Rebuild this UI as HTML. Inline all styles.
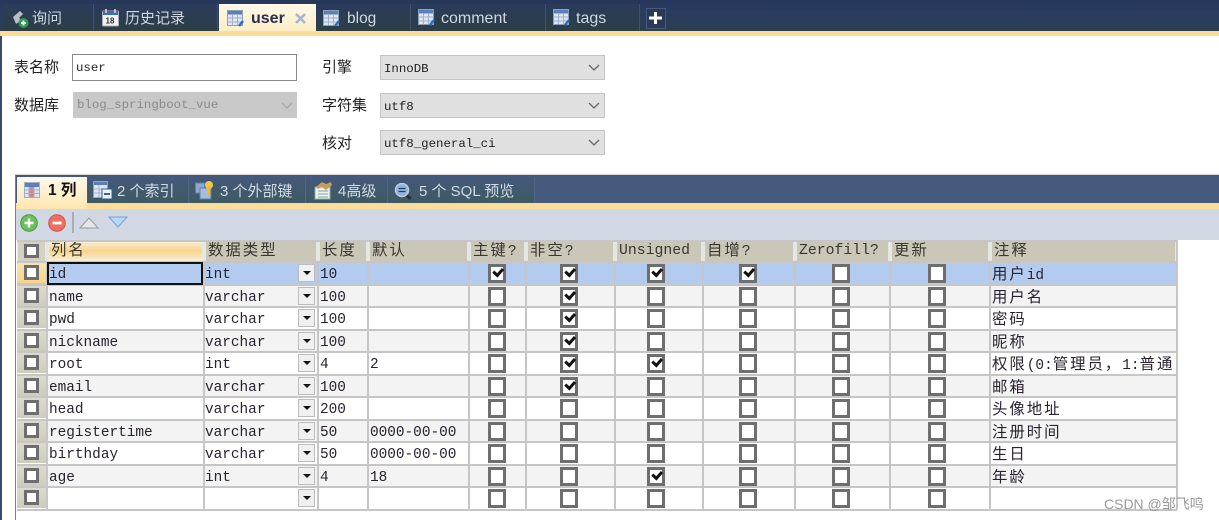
<!DOCTYPE html>
<html><head><meta charset="utf-8">
<style>
html,body{margin:0;padding:0;background:#fff}
#p{position:relative;width:1219px;height:520px;overflow:hidden;background:#fff;font-family:"Liberation Sans","Noto Sans CJK SC",sans-serif;color:#222;filter:blur(.3px)}
#p div,#p svg,#p span{position:absolute}
#p i{font-style:normal;font-size:15.4px;letter-spacing:2px}
.t{white-space:nowrap}
.tab{top:4px;height:27px;background:linear-gradient(#2b3b5c,#2c3f46);border-right:1px solid #3f5168}
.tl{top:8px;font-size:15px;line-height:22px;color:#cfd6de;white-space:nowrap}
.lb{font-size:15px;line-height:20px;color:#222;white-space:nowrap}
.sel{left:380px;width:223px;height:23px;background:#e0e0e0;border:1px solid #c4c4c4;font:12.4px/26px "Liberation Mono",monospace;text-indent:3px;color:#222}
.ar{width:12px;height:7px}
.tab2{top:177px;height:26px;background:linear-gradient(#44597a,#3d5a62);border-right:1px solid #52667f}
.t2l{top:182px;font-size:15px;line-height:20px;color:#d3dae2;white-space:nowrap}
.r{left:17px;width:1160px;height:22.5px;font:14.4px/22.5px "Liberation Mono","Noto Sans CJK SC",monospace;color:#2a2230}
.r.g{background:#f3f3f3}.r.s{background:#b2cbee}
.r span{top:2px;white-space:nowrap}
.a{left:32px}.b{left:188px}.c{left:303px}.d{left:353px}.e{left:975px;width:183px;overflow:hidden;height:21px}
.v{top:0;width:2px;height:248px;background:#c6c6c6}
.h{left:17px;width:1160px;height:2px;background:#c6c6c6}
.rh{left:0;top:1px;width:29px;height:20px;background:linear-gradient(#dcd9ce,#cfccbf)}
.cb{top:2px;width:12px;height:13px;background:#fff;border:3px solid #6e6e6e}
.rh .cb{left:7px;top:2px;width:9px;height:9px}
.cb.k:after{content:"";position:absolute;left:2px;top:1px;width:7px;height:3.5px;border-left:3px solid #111;border-bottom:3px solid #111;transform:rotate(-48deg)}
.k1{left:471px}.k2{left:543px}.k3{left:630px}.k4{left:722px}.k5{left:815px}.k6{left:911px}
.dd{left:281px;top:2px;width:15px;height:16px;background:#f0f0f0;border:1.5px solid #bcbcbc}
.dd:after{content:"";position:absolute;left:3.500px;top:6px;border-left:4px solid transparent;border-right:4px solid transparent;border-top:4px solid #111}
.hd{top:241px;height:20px;background:#cbc7b8;font:14.8px/20px "Liberation Mono","Noto Sans CJK SC",monospace;color:#3a3630;text-indent:2px;white-space:nowrap;overflow:hidden}
</style></head><body>
<div id="p">
<svg width="0" height="0" style="position:absolute"><defs>
<symbol id="tb" viewBox="0 0 18 18"><rect x="0.5" y="0.5" width="15" height="15" fill="#dfe6f0" stroke="#8c9fbd"/><rect x="1" y="1" width="14" height="3.5" fill="#5c7fb8"/><path d="M1 8h14M1 12h14M5.500 4v11M10.500 4v11" stroke="#9db0cc"/><path d="M12 16l4-5" stroke="#2a6fc0" stroke-width="2.500"/></symbol>
</defs></svg>

<!-- top tabs -->
<div style="left:0;top:0;width:1219px;height:31px;background:linear-gradient(#26375a 0,#2a3c60 40%,#2c3f4c 100%)"></div>
<div style="left:0;top:31px;width:1219px;height:5px;background:#fbdc98"></div>
<div style="left:0;top:36px;width:1.5px;height:484px;background:#3a4a68"></div>
<div class="tab" style="left:3px;width:90px"></div>
<div class="tab" style="left:95px;width:122px"></div>
<div style="left:219px;top:4px;width:97px;height:27px;background:linear-gradient(#fff8e8,#fdeec6)"></div>
<div class="tab" style="left:317px;width:93px"></div>
<div class="tab" style="left:411px;width:134px"></div>
<div class="tab" style="left:546px;width:93px"></div>

<svg style="left:11px;top:9px" width="18" height="20" viewBox="0 0 18 20"><path d="M2 8l7-6 3 3-4 4 3 2-6 4z" fill="#b9bec6"/><circle cx="12.500" cy="14" r="5" fill="#2f9a4f"/><path d="M10 14h5M12.500 11.500v5" stroke="#fff" stroke-width="1.800"/></svg>
<div class="tl" style="left:32px">询问</div>
<svg style="left:102px;top:9px" width="17" height="18" viewBox="0 0 17 18"><rect x="0.500" y="2" width="16" height="15" rx="1" fill="#f2f2ee" stroke="#aab"/><rect x="1" y="2" width="15" height="4" fill="#3e6fb0"/><path d="M4 0v4M13 0v4" stroke="#ddd" stroke-width="1.500"/><text x="3.500" y="14.500" font-size="8" font-weight="bold" font-family="Liberation Sans" fill="#333">18</text></svg>
<div class="tl" style="left:125px">历史记录</div>
<svg style="left:227px;top:10px" width="18" height="18"><use href="#tb"/></svg>
<div class="tl" style="left:251px;font-weight:bold;color:#26304a;font-size:16px">user</div>
<svg style="left:295px;top:13px" width="11" height="11" viewBox="0 0 11 11"><path d="M1 1l9 9M10 1l-9 9" stroke="#9fb4d6" stroke-width="2.500"/></svg>
<svg style="left:323px;top:10px" width="18" height="18"><use href="#tb"/></svg>
<div class="tl" style="left:347px;font-size:15.5px">blog</div>
<svg style="left:418px;top:9px" width="18" height="18"><use href="#tb"/></svg>
<div class="tl" style="left:441px;font-size:16px">comment</div>
<svg style="left:553px;top:9px" width="18" height="18"><use href="#tb"/></svg>
<div class="tl" style="left:576px;font-size:16px">tags</div>
<div style="left:646px;top:8px;width:18px;height:19px;border:1px solid #46587a;background:#283a58"></div>
<svg style="left:648px;top:11px" width="15" height="14" viewBox="0 0 15 14"><path d="M7.500 1v12M1 7h13" stroke="#fff" stroke-width="3"/></svg>

<!-- form -->
<div class="lb" style="left:14px;top:58px">表名称</div>
<div style="left:72px;top:54px;width:223px;height:25px;border:1.500px solid #8a8a8a;background:#fff;font:12.4px/27px 'Liberation Mono',monospace;text-indent:3px">user</div>
<div class="lb" style="left:14px;top:96px">数据库</div>
<div style="left:73px;top:92px;width:224px;height:26px;background:#c8c8c8;font:12.4px/27px 'Liberation Mono',monospace;text-indent:4px;color:#8a8a8a">blog_springboot_vue</div>
<svg class="ar" style="left:281px;top:102px" viewBox="0 0 12 7"><path d="M1 1l5 5 5-5" fill="none" stroke="#a8a8a8" stroke-width="1.300"/></svg>
<div class="lb" style="left:322px;top:58px">引擎</div>
<div class="lb" style="left:322px;top:96px">字符集</div>
<div class="lb" style="left:322px;top:134px">核对</div>
<div class="sel" style="top:55px">InnoDB</div>
<div class="sel" style="top:93px">utf8</div>
<div class="sel" style="top:130px">utf8_general_ci</div>
<svg class="ar" style="left:588px;top:64px" viewBox="0 0 12 7"><path d="M1 1l5 5 5-5" fill="none" stroke="#666" stroke-width="1.300"/></svg>
<svg class="ar" style="left:588px;top:102px" viewBox="0 0 12 7"><path d="M1 1l5 5 5-5" fill="none" stroke="#666" stroke-width="1.300"/></svg>
<svg class="ar" style="left:588px;top:139px" viewBox="0 0 12 7"><path d="M1 1l5 5 5-5" fill="none" stroke="#666" stroke-width="1.300"/></svg>

<!-- lower panel -->
<div style="left:15px;top:174px;width:1204px;height:1px;background:#d8d8d8"></div>
<div style="left:15px;top:175px;width:1px;height:345px;background:#6d80a0"></div>
<div style="left:16px;top:175px;width:1203px;height:28px;background:#455a7c"></div>
<div style="left:16px;top:203px;width:1203px;height:6px;background:#fbdc98"></div>
<div style="left:16px;top:209px;width:1203px;height:31px;background:#d1d8e3"></div>
<div style="left:17px;top:177px;width:70px;height:32px;background:linear-gradient(#fff9ea,#fde7b0)"></div>
<div class="tab2" style="left:88px;width:100px"></div>
<div class="tab2" style="left:190px;width:115px"></div>
<div class="tab2" style="left:306px;width:81px"></div>
<div class="tab2" style="left:388px;width:146px"></div>

<svg style="left:24px;top:182px" width="16" height="16" viewBox="0 0 16 16"><rect x="0.500" y="0.500" width="15" height="15" fill="#dfe6f0" stroke="#9db0cc"/><rect x="1" y="1" width="14" height="4" fill="#5c7fb8"/><rect x="5" y="5" width="5" height="10" fill="#d8808c"/><path d="M1 8h14M1 11.500h14M5 5v10M10 5v10" stroke="#9db0cc"/></svg>
<div class="t" style="left:48px;top:181px;font-size:15.500px;line-height:20px;font-weight:bold;color:#111">1 列</div>
<svg style="left:93px;top:181px" width="20" height="19" viewBox="0 0 20 19"><rect x="0.500" y="0.500" width="14" height="16" fill="#dbe4f0" stroke="#8ea4c4"/><rect x="1" y="1" width="13" height="3" fill="#5c7fb8"/><path d="M1 8h13M1 12h13M6 4v12" stroke="#a4b6d0"/><rect x="9" y="8" width="10" height="10" fill="#eef2f8" stroke="#35609c"/><path d="M11 13h6" stroke="#35609c" stroke-width="2"/></svg>
<div class="t2l" style="left:117px">2 个索引</div>
<svg style="left:195px;top:181px" width="21" height="19" viewBox="0 0 21 19"><rect x="0.500" y="2" width="9" height="10" fill="#8fa8cc" stroke="#5c7fb8"/><rect x="5" y="7" width="11" height="11" fill="#a8bcd8" stroke="#5c7fb8"/><circle cx="14" cy="4" r="4" fill="#f4c842"/><rect x="12.500" y="5" width="3" height="9" fill="#f0b830"/></svg>
<div class="t2l" style="left:220px">3 个外部键</div>
<svg style="left:314px;top:181px" width="19" height="19" viewBox="0 0 19 19"><rect x="1" y="6" width="15" height="12" fill="#f0f0f0" stroke="#8aa"/><path d="M4 10h10M4 13h10M4 16h10" stroke="#7a9"/><path d="M2 6l6-5 4 2 5-2 1 3-6 5-4-3-4 2z" fill="#c99a60"/></svg>
<div class="t2l" style="left:338px">4高级</div>
<svg style="left:394px;top:183px" width="20" height="18" viewBox="0 0 20 18"><path d="M11 11l6 5" stroke="#26303c" stroke-width="3"/><circle cx="8" cy="7" r="6.500" fill="#8fb0e0" stroke="#c4ccd8" stroke-width="1.500"/><path d="M4.500 5.500h7M4.500 8.500h7" stroke="#22406e" stroke-width="1.200"/></svg>
<div class="t2l" style="left:419px">5 个 SQL 预览</div>

<!-- toolbar -->
<svg style="left:20px;top:214px" width="18" height="18" viewBox="0 0 18 18"><circle cx="9" cy="9" r="8.300" fill="#6cbf5c" stroke="#4a9a44"/><path d="M4.500 9h9M9 4.500v9" stroke="#fff" stroke-width="2.500"/></svg>
<svg style="left:48px;top:214px" width="18" height="18" viewBox="0 0 18 18"><circle cx="9" cy="9" r="8.300" fill="#ee6f62" stroke="#c9574e"/><path d="M4.500 9h9" stroke="#fff" stroke-width="2.800"/></svg>
<div style="left:72px;top:212px;width:1.500px;height:21px;background:#a8aeb8"></div>
<svg style="left:79px;top:216px" width="20" height="13" viewBox="0 0 20 13"><path d="M1 12L10 2l9 10z" fill="#e4e6ea" stroke="#9a9a9a"/></svg>
<svg style="left:108px;top:216px" width="20" height="13" viewBox="0 0 20 13"><path d="M1 1l9 10L19 1z" fill="#bcd6f6" stroke="#6fa4de"/></svg>

<!-- grid header -->
<div style="left:17px;top:240px;width:1160px;height:22px;background:#e6e6e2"></div>
<div class="hd" style="left:18px;width:27px;background:#d3d0c4"></div>
<div class="cb" style="left:24px;top:244px;width:9px;height:8px"></div>
<div class="hd" style="left:49px;width:153px;background:linear-gradient(#f7efdc,#f8d48a 50%,#f7efdc)"><i>列名</i></div>
<div class="hd" style="left:206px;width:110px"><i>数据类型</i></div>
<div class="hd" style="left:320px;width:46px"><i>长度</i></div>
<div class="hd" style="left:370px;width:97px"><i>默认</i></div>
<div class="hd" style="left:471px;width:53px"><i>主键</i>?</div>
<div class="hd" style="left:528px;width:85px"><i>非空</i>?</div>
<div class="hd" style="left:617px;width:84px">Unsigned</div>
<div class="hd" style="left:705px;width:88px"><i>自增</i>?</div>
<div class="hd" style="left:797px;width:91px">Zerofill?</div>
<div class="hd" style="left:892px;width:96px"><i>更新</i></div>
<div class="hd" style="left:992px;width:183px"><i>注释</i></div>

<!-- rows -->
<div class="r s" style="top:262px"><div class="rh" style="background:linear-gradient(#f9e4b0,#f8d48a)"><div class="cb"></div></div><span class="a">id</span><span class="b">int</span><div class="dd"></div><span class="c">10</span><div class="cb k k1"></div><div class="cb k k2"></div><div class="cb k k3"></div><div class="cb k k4"></div><div class="cb k5"></div><div class="cb k6"></div><span class="e"><i>用户</i>id</span></div>
<div class="r g" style="top:284.5px"><div class="rh"><div class="cb"></div></div><span class="a">name</span><span class="b">varchar</span><div class="dd"></div><span class="c">100</span><div class="cb k1"></div><div class="cb k k2"></div><div class="cb k3"></div><div class="cb k4"></div><div class="cb k5"></div><div class="cb k6"></div><span class="e"><i>用户名</i></span></div>
<div class="r" style="top:307px"><div class="rh"><div class="cb"></div></div><span class="a">pwd</span><span class="b">varchar</span><div class="dd"></div><span class="c">100</span><div class="cb k1"></div><div class="cb k k2"></div><div class="cb k3"></div><div class="cb k4"></div><div class="cb k5"></div><div class="cb k6"></div><span class="e"><i>密码</i></span></div>
<div class="r g" style="top:329.5px"><div class="rh"><div class="cb"></div></div><span class="a">nickname</span><span class="b">varchar</span><div class="dd"></div><span class="c">100</span><div class="cb k1"></div><div class="cb k k2"></div><div class="cb k3"></div><div class="cb k4"></div><div class="cb k5"></div><div class="cb k6"></div><span class="e"><i>昵称</i></span></div>
<div class="r" style="top:352px"><div class="rh"><div class="cb"></div></div><span class="a">root</span><span class="b">int</span><div class="dd"></div><span class="c">4</span><span class="d">2</span><div class="cb k1"></div><div class="cb k k2"></div><div class="cb k k3"></div><div class="cb k4"></div><div class="cb k5"></div><div class="cb k6"></div><span class="e"><i>权限</i>(0:<i>管理员，</i>1:<i>普通用户</i>)</span></div>
<div class="r g" style="top:374.5px"><div class="rh"><div class="cb"></div></div><span class="a">email</span><span class="b">varchar</span><div class="dd"></div><span class="c">100</span><div class="cb k1"></div><div class="cb k k2"></div><div class="cb k3"></div><div class="cb k4"></div><div class="cb k5"></div><div class="cb k6"></div><span class="e"><i>邮箱</i></span></div>
<div class="r" style="top:397px"><div class="rh"><div class="cb"></div></div><span class="a">head</span><span class="b">varchar</span><div class="dd"></div><span class="c">200</span><div class="cb k1"></div><div class="cb k2"></div><div class="cb k3"></div><div class="cb k4"></div><div class="cb k5"></div><div class="cb k6"></div><span class="e"><i>头像地址</i></span></div>
<div class="r g" style="top:419.5px"><div class="rh"><div class="cb"></div></div><span class="a">registertime</span><span class="b">varchar</span><div class="dd"></div><span class="c">50</span><span class="d">0000-00-00</span><div class="cb k1"></div><div class="cb k2"></div><div class="cb k3"></div><div class="cb k4"></div><div class="cb k5"></div><div class="cb k6"></div><span class="e"><i>注册时间</i></span></div>
<div class="r" style="top:442px"><div class="rh"><div class="cb"></div></div><span class="a">birthday</span><span class="b">varchar</span><div class="dd"></div><span class="c">50</span><span class="d">0000-00-00</span><div class="cb k1"></div><div class="cb k2"></div><div class="cb k3"></div><div class="cb k4"></div><div class="cb k5"></div><div class="cb k6"></div><span class="e"><i>生日</i></span></div>
<div class="r g" style="top:464.5px"><div class="rh"><div class="cb"></div></div><span class="a">age</span><span class="b">int</span><div class="dd"></div><span class="c">4</span><span class="d">18</span><div class="cb k1"></div><div class="cb k2"></div><div class="cb k k3"></div><div class="cb k4"></div><div class="cb k5"></div><div class="cb k6"></div><span class="e"><i>年龄</i></span></div>
<div class="r" style="top:487px"><div class="rh"><div class="cb"></div></div><div class="dd"></div><div class="cb k1"></div><div class="cb k2"></div><div class="cb k3"></div><div class="cb k4"></div><div class="cb k5"></div><div class="cb k6"></div></div>

<!-- grid lines -->
<div class="h" style="top:240px"></div><div class="h" style="top:261px"></div><div class="h" style="top:283.5px"></div><div class="h" style="top:306px"></div><div class="h" style="top:328.5px"></div><div class="h" style="top:351px"></div><div class="h" style="top:373.5px"></div><div class="h" style="top:396px"></div><div class="h" style="top:418.5px"></div><div class="h" style="top:441px"></div><div class="h" style="top:463.5px"></div><div class="h" style="top:486px"></div><div class="h" style="top:508.5px"></div>
<div class="v" style="left:46px;top:262px"></div><div class="v" style="left:203px;top:262px"></div><div class="v" style="left:317px;top:262px"></div><div class="v" style="left:367px;top:262px"></div><div class="v" style="left:468px;top:262px"></div><div class="v" style="left:525px;top:262px"></div><div class="v" style="left:614px;top:262px"></div><div class="v" style="left:702px;top:262px"></div><div class="v" style="left:794px;top:262px"></div><div class="v" style="left:889px;top:262px"></div><div class="v" style="left:989px;top:262px"></div><div class="v" style="left:1176px;top:240px;height:270px"></div>
<!-- selected cell -->
<div style="left:46.5px;top:262px;width:152.500px;height:18.500px;border:2px solid #111"></div>
<!-- watermark -->
<div class="t" style="left:1104px;top:495px;font-size:14px;line-height:18px;color:#9a9a9a">CSDN @邹飞鸣</div>
</div>
</body></html>
